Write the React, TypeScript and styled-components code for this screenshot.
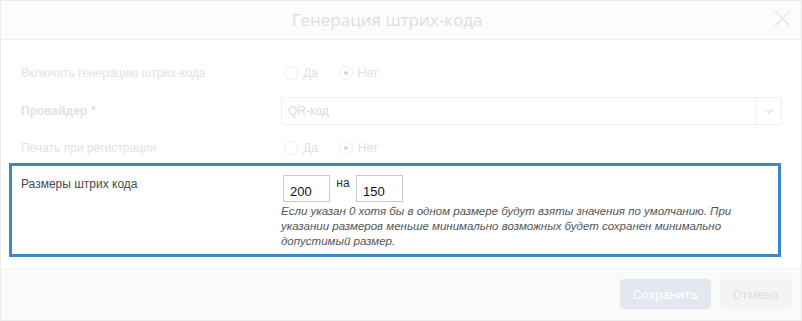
import React from 'react'
import styled, { createGlobalStyle } from 'styled-components'

const GlobalStyle = createGlobalStyle`
  html, body {
    margin: 0;
    padding: 0;
    background: #ffffff;
  }
  * {
    box-sizing: border-box;
  }
`

const Modal = styled.div`
  width: 802px;
  height: 321px;
  display: flex;
  flex-direction: column;
  border: 1px solid #ececec;
  background: #ffffff;
  font-family: 'Liberation Sans', Arial, sans-serif;
  font-size: 12px;
`

const Header = styled.div`
  height: 39px;
  flex: none;
  display: grid;
  grid-template-columns: 1fr 28px;
  align-items: center;
  background: #fcfcfc;
  border-bottom: 1px solid #f0f0f0;
`

const Title = styled.div`
  text-align: center;
  font-family: 'Open Sans', sans-serif;
  font-size: 17px;
  color: #dedede;
  padding-bottom: 1px;
`

const CloseButton = styled.button`
  width: 18px;
  height: 18px;
  padding: 0;
  border: none;
  background: none;
  display: flex;
  align-items: center;
  justify-content: center;
  margin-bottom: 3px;
`

const Body = styled.div`
  flex: 1;
  padding: 16px 0 10px;
  display: flex;
  flex-direction: column;
`

const Row = styled.div<{ height: number; top: number }>`
  display: grid;
  grid-template-columns: 260px 1fr;
  align-items: center;
  height: ${({ height }) => height}px;
  margin-top: ${({ top }) => top}px;
  padding-left: 20px;
  padding-right: 19px;
`

const Label = styled.div<{ bold?: boolean }>`
  color: #e2e2e2;
  font-weight: ${({ bold }) => (bold ? 700 : 400)};
  font-size: 12px;
`

const Required = styled.span`
  color: #f6cccc;
  font-weight: 400;
  margin-left: 4px;
`

const RadioGroup = styled.div`
  display: flex;
  align-items: center;
  padding-left: 3px;
`

const RadioItem = styled.label`
  display: flex;
  align-items: center;
  gap: 5px;
  margin-right: 21px;
  color: #e0e0e0;
  font-size: 12px;
`

const RadioCircle = styled.span<{ checked?: boolean }>`
  width: 14px;
  height: 14px;
  border-radius: 50%;
  border: 1px solid #eeeeee;
  background: #ffffff;
  display: flex;
  align-items: center;
  justify-content: center;

  &::after {
    content: '';
    width: 4px;
    height: 4px;
    border-radius: 50%;
    background: ${({ checked }) => (checked ? '#d6d6d6' : 'transparent')};
  }
`

const Select = styled.div`
  height: 28px;
  display: flex;
  border: 1px solid #f0f0f0;
  border-radius: 2px;
  color: #dadada;
`

const SelectValue = styled.div`
  flex: 1;
  display: flex;
  align-items: center;
  padding-left: 6px;
  font-size: 12px;
`

const SelectArrow = styled.div`
  width: 25px;
  border-left: 1px solid #f0f0f0;
  display: flex;
  align-items: center;
  justify-content: center;
`

const Highlight = styled.div`
  margin: 1px 20px 0 8px;
  height: 94px;
  border: 3px solid #3d88c4;
  padding: 9px 0 6px 9px;
  display: grid;
  grid-template-columns: 260px 1fr;
  align-items: start;
`

const SizeLabel = styled.div`
  color: #4a4a4a;
  font-size: 12px;
  line-height: 16px;
  padding-top: 1px;
`

const SizeControls = styled.div`
  display: flex;
  flex-direction: column;
`

const SizeInputs = styled.div`
  display: flex;
  align-items: flex-start;
  padding-left: 2px;
`

const SizeInput = styled.input`
  width: 47px;
  height: 27px;
  border: 1px solid #c9c9c9;
  padding: 5px 0 0 6px;
  font-family: 'Liberation Sans', Arial, sans-serif;
  font-size: 13px;
  color: #111111;
  outline: none;
`

const Separator = styled.span`
  width: 26px;
  text-align: center;
  color: #333333;
  font-size: 12px;
  line-height: 14px;
  margin-top: 1px;
`

const Hint = styled.div`
  margin-top: 2px;
  font-style: italic;
  font-size: 11.5px;
  line-height: 15px;
  color: #555555;
  padding-right: 14px;
`

const Footer = styled.div`
  height: 52px;
  flex: none;
  border-top: 1px solid #f2f2f2;
  background: #fafafa;
  display: flex;
  justify-content: flex-end;
  align-items: flex-start;
  gap: 9px;
  padding: 10px 9px 0 0;
`

const Button = styled.button<{ primary?: boolean }>`
  height: 30px;
  padding: 0 13px;
  border: none;
  border-radius: 4px;
  font-family: Roboto, sans-serif;
  font-size: 13px;
  background: ${({ primary }) => (primary ? '#e2e7f0' : '#f4f4f4')};
  color: ${({ primary }) => (primary ? '#ffffff' : '#e0e0e0')};
`

export default function App() {
  return (
    <>
      <GlobalStyle />
      <Modal>
        <Header>
          <Title>Генерация штрих-кода</Title>
          <CloseButton>
            <svg width="17" height="17" viewBox="0 0 17 17">
              <path d="M1 1 L16 16 M16 1 L1 16" stroke="#e6e6e6" strokeWidth="1.6" fill="none" />
            </svg>
          </CloseButton>
        </Header>
        <Body>
          <Row height={34} top={0}>
            <Label>Включить генерацию штрих-кода</Label>
            <RadioGroup>
              <RadioItem>
                <RadioCircle />
                Да
              </RadioItem>
              <RadioItem>
                <RadioCircle checked />
                Нет
              </RadioItem>
            </RadioGroup>
          </Row>
          <Row height={28} top={7}>
            <Label bold>
              Провайдер<Required>*</Required>
            </Label>
            <Select>
              <SelectValue>QR-код</SelectValue>
              <SelectArrow>
                <svg width="10" height="6" viewBox="0 0 10 6">
                  <path d="M1 1 L5 5 L9 1" stroke="#e2e2e2" strokeWidth="1.4" fill="none" />
                </svg>
              </SelectArrow>
            </Select>
          </Row>
          <Row height={28} top={9}>
            <Label>Печать при регистрации</Label>
            <RadioGroup>
              <RadioItem>
                <RadioCircle />
                Да
              </RadioItem>
              <RadioItem>
                <RadioCircle checked />
                Нет
              </RadioItem>
            </RadioGroup>
          </Row>
          <Highlight>
            <SizeLabel>Размеры штрих кода</SizeLabel>
            <SizeControls>
              <SizeInputs>
                <SizeInput defaultValue="200" />
                <Separator>на</Separator>
                <SizeInput defaultValue="150" />
              </SizeInputs>
              <Hint>
                Если указан 0 хотя бы в одном размере будут взяты значения по умолчанию. При
                указании размеров меньше минимально возможных будет сохранен минимально
                допустимый размер.
              </Hint>
            </SizeControls>
          </Highlight>
        </Body>
        <Footer>
          <Button primary>Сохранить</Button>
          <Button>Отмена</Button>
        </Footer>
      </Modal>
    </>
  )
}
